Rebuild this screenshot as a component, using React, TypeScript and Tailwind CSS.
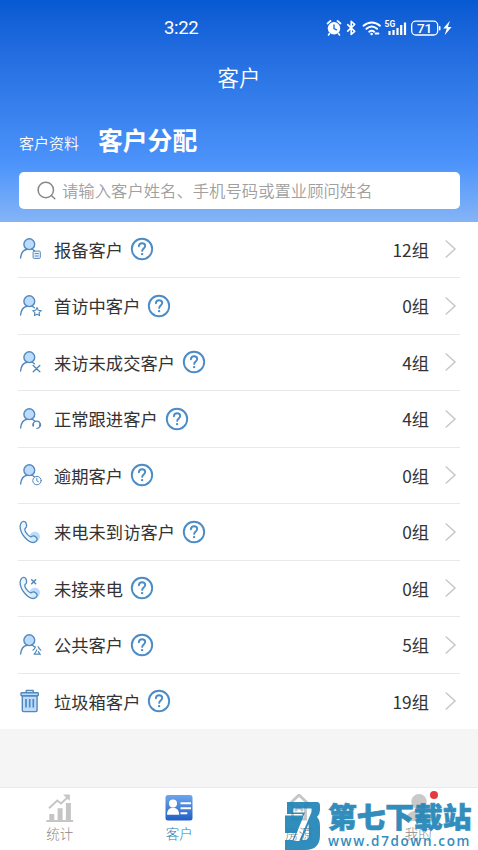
import type { ReactNode } from "react";

type Badge = "note" | "star" | "cross" | "headset" | "clock" | "public";

const LINE = "#5288ba";
const FILL = "#bcdcff";

function PersonIcon({ badge }: { badge: Badge }) {
    return (
        <svg width="24" height="24" viewBox="0 0 24 24" fill="none" stroke={LINE} strokeWidth="1.4" strokeLinecap="round" strokeLinejoin="round">
            <circle cx="10.3" cy="7.2" r="5.4" fill={FILL} />
            <path d="M1.6 21c.5-5 2.9-8.1 6.6-8.7M12.6 12.2c1.2.4 2 .9 2.8 1.6" />
            {badge === "note" && (
                <>
                    <rect x="14.1" y="14.1" width="7.2" height="7.3" rx="1" fill="#eef6ff" strokeWidth="1" />
                    <path d="M16 16.6h3.4M16 19h3.4" strokeWidth="1" />
                </>
            )}
            {badge === "star" && (
                <path d="M18 13.6l1.3 2.6 2.9.4-2.1 2.1.5 2.9-2.6-1.4-2.6 1.4.5-2.9-2.1-2.1 2.9-.4z" strokeWidth="1.1" />
            )}
            {badge === "cross" && <path d="M14.2 15.4l6.6 6.4M20.8 15.4l-6.6 6.4" />}
            {badge === "headset" && (
                <>
                    <path d="M14.3 17.6c0-4.6 6.8-4.6 6.8 0 0 2.3-1 3.7-3.2 3.8" strokeWidth="1.2" />
                    <path d="M14.2 17v1.8M21.2 17v1.8" strokeWidth="1.8" />
                </>
            )}
            {badge === "clock" && (
                <>
                    <circle cx="18" cy="17.6" r="4.2" fill="#fff" strokeWidth="1" />
                    <path d="M17.8 15.2v2.6l1.7 1" strokeWidth="1" />
                </>
            )}
            {badge === "public" && (
                <path d="M16.4 13.8c-.4 1.4-1.2 2.6-2.5 3.4M19.2 13.8c.5 1.4 1.3 2.6 2.7 3.4M17.7 16.8c-.5 1.7-1.3 3-2.6 4.4 2 0 3.6-.1 5.4-.4M19.3 18.6c.8.9 1.4 1.8 1.9 3" strokeWidth="1.2" />
            )}
        </svg>
    );
}

function PhoneIcon({ missed = false }: { missed?: boolean }) {
    return (
        <svg width="24" height="24" viewBox="0 0 24 24" fill="none" stroke={LINE} strokeWidth="1.3" strokeLinecap="round" strokeLinejoin="round">
            <circle cx="15.8" cy="16.6" r="5.2" fill={FILL} stroke="none" />
            <path d="M2.4 2.6C3.5 1 5.8.8 6.8 2.6c.8 1.5 1.1 3 .6 4.3-.5 1.1-1.6 1.4-1.6 2.6 0 2.2 3.4 6.600 5.500 7.200 1.300.4 1.900-.8 3-.9 1.600-.1 3.500 1.700 3.800 3.100.3 1.700-1.700 3.600-3.900 3.600C9 22.300 1.100 14 1.100 6.500c0-1.500.5-2.800 1.300-3.900z" fill="#e3f1ff" fillOpacity=".7" />
            {missed && <path d="M12.7 3.7l4 4M16.7 3.7l-4 4" strokeWidth="1.5" />}
        </svg>
    );
}

function TrashIcon() {
    return (
        <svg width="24" height="24" viewBox="0 0 24 24" fill="none" stroke={LINE} strokeWidth="1.4" strokeLinejoin="round">
            <path d="M3.3 6.7h14.8v14.6q0 1.3-1.3 1.3H4.6q-1.3 0-1.3-1.3z" fill={FILL} />
            <rect x="2" y="3.7" width="17.3" height="3" rx=".7" fill={FILL} />
            <path d="M7.2 3.7V1.5h7v2.2" />
            <path d="M7 10v8.5M10.7 10v8.5M14.3 10v8.5" strokeWidth="1.7" />
        </svg>
    );
}

function HelpIcon() {
    return (
        <svg width="24" height="24" viewBox="0 0 24 24" fill="none" stroke="#4b8cc6" strokeLinecap="round">
            <circle cx="12" cy="12" r="10.2" strokeWidth="1.9" />
            <path d="M8.9 9.3c.1-1.9 1.4-3 3.2-3s3.1 1.1 3.1 2.7c0 2.4-3 2.4-3 4.9" strokeWidth="1.9" />
            <circle cx="12.1" cy="17.1" r="1.2" fill="#4b8cc6" stroke="none" />
        </svg>
    );
}

const rows: { label: string; count: string; icon: ReactNode }[] = [
    { label: "报备客户", count: "12组", icon: <PersonIcon badge="note" /> },
    { label: "首访中客户", count: "0组", icon: <PersonIcon badge="star" /> },
    { label: "来访未成交客户", count: "4组", icon: <PersonIcon badge="cross" /> },
    { label: "正常跟进客户", count: "4组", icon: <PersonIcon badge="headset" /> },
    { label: "逾期客户", count: "0组", icon: <PersonIcon badge="clock" /> },
    { label: "来电未到访客户", count: "0组", icon: <PhoneIcon /> },
    { label: "未接来电", count: "0组", icon: <PhoneIcon missed /> },
    { label: "公共客户", count: "5组", icon: <PersonIcon badge="public" /> },
    { label: "垃圾箱客户", count: "19组", icon: <TrashIcon /> },
];

function StatusBar() {
    return (
        <div className="flex h-[56px] items-center pl-[164px] pr-[24px]">
            <span className="pt-px font-[Roboto] text-[18.5px] leading-none tracking-[-0.3px]">3:22</span>
            <svg className="ml-auto" width="128" height="20" viewBox="0 0 128 20" fill="none" stroke="#fff" strokeLinecap="round">
                <circle cx="8" cy="10.3" r="6.2" fill="#fff" stroke="none" />
                <path d="M1.5 5.5l3-2.7M14.5 5.5l-3-2.7M3.500 15.600l-1 1.300M12.500 15.600l1 1.300" strokeWidth="1.7" />
                <path d="M8 6.8v3.8l2.6 1.2" stroke="#1b67dc" strokeWidth="1.3" />
                <path d="M21.700 6.700l7 6.700-3.500 3V3.400l3.500 3-7 6.700" strokeWidth="1.6" strokeLinejoin="round" />
                <path d="M37.500 7.700c5-4.400 11.500-4.400 16.500 0M40.400 10.800c3.500-3 7.200-3 10.700 0M43.200 13.700c1.700-1.400 3.300-1.400 5 0" strokeWidth="2" />
                <circle cx="45.6" cy="16" r="1.3" fill="#fff" stroke="none" />
                <path d="M49.600 15.500h2.800" strokeWidth="1.9" />
                <text x="58.5" y="8.5" fill="#fff" stroke="none" fontSize="8.5" fontFamily="Roboto, sans-serif" fontWeight="700">5G</text>
                <path d="M63.500 13v4M67.500 12v5M71.500 10v7M75.200 7v10M79 4.500v12.500" strokeWidth="2.2" strokeLinecap="butt" />
                <rect x="85.7" y="3.2" width="26" height="13.8" rx="4" strokeWidth="1.3" />
                <text x="98.6" y="15" textAnchor="middle" fill="#fff" stroke="none" fontSize="13.5" fontFamily="Roboto, sans-serif" fontWeight="500">71</text>
                <path d="M113.700 8.700v3" strokeWidth="1.6" />
                <path d="M124 2.800l-6.800 7.800h3.600l-2.200 6.600 7-8.300h-3.700z" fill="#fff" stroke="none" />
            </svg>
        </div>
    );
}

function StatsIcon() {
    return (
        <svg width="28" height="28" viewBox="0 0 28 28" fill="#c5c5c5">
            <path d="M.4 26h26.800v2H.4zM3.300 20h5v6h-5zM11.600 14.300h5V26h-5zM19.900 9h5v17h-5z" />
            <path d="M3 14.200l8.300-7.700 3.700 3 7-6.500" fill="none" stroke="#c5c5c5" strokeWidth="1.900" />
            <path d="M17 .5h6.800v6.500z" />
        </svg>
    );
}

function CardIcon() {
    return (
        <svg width="28" height="28" viewBox="0 0 28 28">
            <defs>
                <linearGradient id="card" x1="0" y1="0" x2="0" y2="1">
                    <stop offset="0" stopColor="#6ea5ed" />
                    <stop offset="1" stopColor="#205fc5" />
                </linearGradient>
            </defs>
            <rect x=".5" y="1" width="27" height="25.500" rx="2.500" fill="url(#card)" />
            <circle cx="8" cy="9.500" r="4" fill="#fff" />
            <path d="M2 20.800c0-4.800 2.400-7 6-7s6.200 2.200 6.200 7zM15.500 8.200H26v2H15.500zM15.500 13.200H26v2H15.500zM15.500 18.200h6.800v2h-6.800z" fill="#fff" />
        </svg>
    );
}

function HouseIcon() {
    return (
        <svg width="28" height="28" viewBox="0 0 28 28" fill="none" stroke="#c5c5c5" strokeWidth="2.8">
            <path d="M3.500 11L14 1l10.500 10M7.500 10v15h13V10M10 17l4-4 4 4" />
        </svg>
    );
}

function MeIcon() {
    return (
        <svg width="28" height="28" viewBox="0 0 28 28" fill="#c9c9c9">
            <circle cx="15" cy="7.700" r="7.700" />
            <path d="M2 27c0-7 4-10.500 12.500-10.500S27 20 27 27z" />
        </svg>
    );
}

const tabs = [
    { label: "统计", icon: <StatsIcon /> },
    { label: "客户", icon: <CardIcon />, active: true },
    { label: "房源", icon: <HouseIcon /> },
    { label: "我的", icon: <MeIcon />, dot: true },
];

function Watermark() {
    return (
        <div className="absolute bottom-0 left-[284px] flex h-[50px] w-[192px] gap-[7px] text-[#1f84b7] opacity-92">
            <svg width="37" height="50" viewBox="0 0 37 50" className="shrink-0" fill="currentColor" fillRule="evenodd">
                <path d="M3 2h30q3 0 3 4v4q0 4-3 7 3 3 3 9v9q0 15-15 15H1V40h7.500l3-7H1V15.500h17.500V14H3zM9 8.500v4h12L9.500 41h5.800L27.500 12V8.500zM24.500 24l-6.600 16H20q5 0 5-5z" />
            </svg>
            <div className="flex flex-col">
                <span className="h-[34px] whitespace-nowrap text-[28.700px] font-black leading-[32px] [-webkit-text-stroke:0.7px_#1f84b7]">第七下载站</span>
                <span className="whitespace-nowrap font-['Open_Sans'] text-[13.500px] font-semibold leading-[18px] tracking-[1.600px]">www.d7down.com</span>
            </div>
        </div>
    );
}

export default function App() {
    return (
        <div className="relative flex h-[850px] w-[478px] flex-col overflow-hidden bg-[#f5f5f5] font-['Noto_Sans_CJK_SC',sans-serif] text-[#333]">
            <header className="flex h-[221.500px] shrink-0 flex-col bg-linear-to-b from-[#0759d2] via-[#4c94fb] via-74% to-[#85b4f6] text-white">
                <StatusBar />
                <h1 className="h-[44px] text-center text-[21.500px] font-[350] leading-[42px]">客户</h1>
                <div className="flex h-[72px] items-end gap-[19px] px-[19px] pb-[16px]">
                    <span className="text-[15px] font-[350] leading-[27px]">客户资料</span>
                    <span className="text-[24.800px] font-bold leading-[33px]">客户分配</span>
                </div>
                <div className="ml-[19px] mr-[18px] flex h-[37px] items-center rounded-[5px] bg-white pl-[18px]">
                    <svg width="20" height="20" viewBox="0 0 20 20" fill="none" stroke="#888" strokeWidth="1.5" strokeLinecap="round">
                        <circle cx="8.800" cy="9" r="7.700" />
                        <path d="M14.400 14.500l3.400 3.300" />
                    </svg>
                    <span className="ml-[5px] pb-px text-[16.350px] font-[350] leading-none text-[#a0a0a0]">请输入客户姓名、手机号码或置业顾问姓名</span>
                </div>
            </header>

            <main className="flex h-[507.500px] shrink-0 flex-col bg-white">
                {rows.map((row) => (
                    <div key={row.label} className="mx-[18px] flex flex-1 items-center border-b border-[#e8e8e8] last:border-b-0">
                        <span className="ml-px">{row.icon}</span>
                        <span className="ml-[11px] text-[17.300px] leading-none">{row.label}</span>
                        <span className="ml-[7px]"><HelpIcon /></span>
                        <span className="ml-auto text-[17.300px] leading-none">{row.count}</span>
                        <svg className="ml-[15px] mr-[3px]" width="13" height="20" viewBox="0 0 13 20" fill="none" stroke="#c8c8c8" strokeWidth="1.5">
                            <path d="M1.700 1.500L11 10l-9.300 8.500" />
                        </svg>
                    </div>
                ))}
            </main>

            <nav className="mt-auto flex h-[63px] border-t border-[#e9e9e9] bg-white">
                {tabs.map((tab) => (
                    <div key={tab.label} className={`flex flex-1 flex-col items-center pt-[6px] ${tab.active ? "text-[#1b86ba]" : "text-[#888]"}`}>
                        <div className="relative">
                            {tab.icon}
                            {tab.dot && <i className="absolute -right-[6px] -top-[3px] size-[8px] rounded-full bg-[#e33b3b]" />}
                        </div>
                        <span className="mt-px text-[13.500px] font-light leading-[20px]">{tab.label}</span>
                    </div>
                ))}
            </nav>
            <Watermark />
        </div>
    );
}
